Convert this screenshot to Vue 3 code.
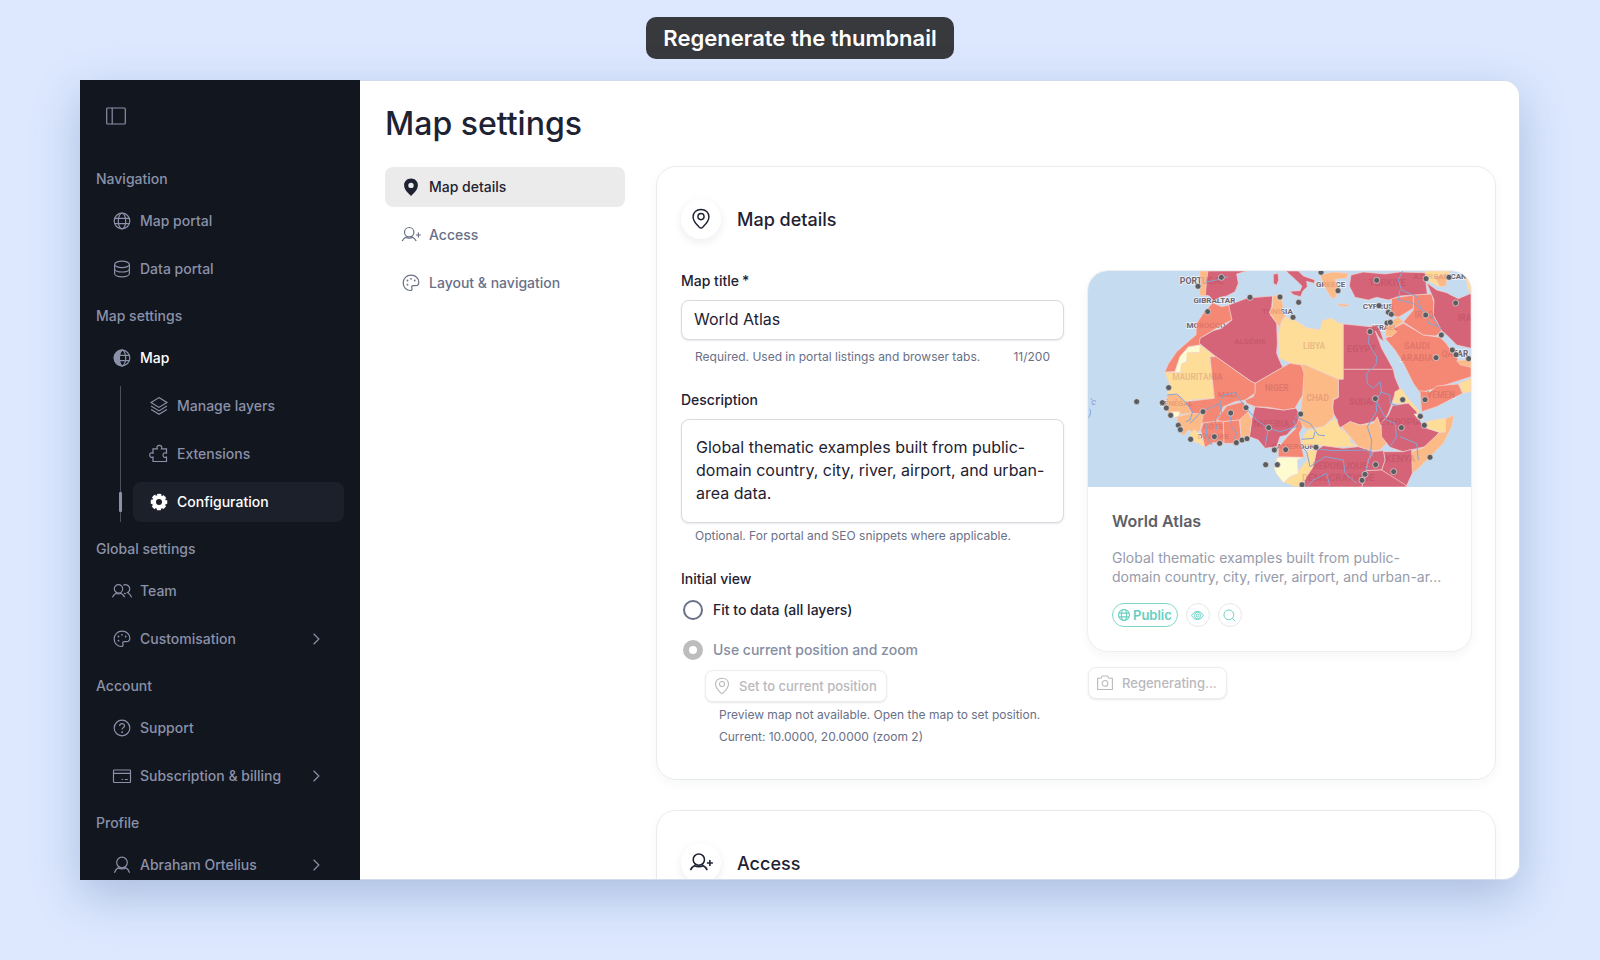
<script setup>
import { ref } from 'vue'

const title = ref('World Atlas')
const description = ref(
  'Global thematic examples built from public-domain country, city, river, airport, and urban-area data.'
)
const view = ref('current')

const groups = [
  {
    name: 'Navigation',
    items: [
      { label: 'Map portal', icon: 'globe' },
      { label: 'Data portal', icon: 'database' }
    ]
  },
  {
    name: 'Map settings',
    items: [
      {
        label: 'Map',
        icon: 'globe-half',
        current: true,
        children: [
          { label: 'Manage layers', icon: 'layers' },
          { label: 'Extensions', icon: 'puzzle' },
          { label: 'Configuration', icon: 'gear', active: true }
        ]
      }
    ]
  },
  {
    name: 'Global settings',
    items: [
      { label: 'Team', icon: 'team' },
      { label: 'Customisation', icon: 'palette', more: true }
    ]
  },
  {
    name: 'Account',
    items: [
      { label: 'Support', icon: 'help' },
      { label: 'Subscription & billing', icon: 'card', more: true }
    ]
  },
  { name: 'Profile', items: [{ label: 'Abraham Ortelius', icon: 'user', more: true }] }
]

const tabs = [
  { label: 'Map details', icon: 'pin-solid', active: true },
  { label: 'Access', icon: 'user-plus' },
  { label: 'Layout & navigation', icon: 'palette' }
]

const land = [
  ['o', '359,33 384,33 380,60 376,108 358,106 362,70'],
  ['r', '384,33 500,33 470,42 475,70 465,95 440,108 420,112 400,122 388,108 376,105 380,60'],
  ['r', '580,43 594,40 596,60 590,76 580,70'],
  ['r', '618,33 655,33 670,48 705,60 702,70 680,64 682,80 668,94 662,110 640,104 630,94 660,92 666,78 645,58'],
  ['s', '398,128 425,140 448,135 456,180 425,195 360,235 360,255 325,260 300,290 285,335 254,337 265,312 290,275 330,240 348,225 350,190 370,160'],
  ['p', '325,262 362,255 360,278 322,280 320,305 305,312 302,338 254,337 285,335 300,290'],
  ['y', '360,255 408,290 390,290 403,415 330,420 318,430 295,408 262,405 268,370 254,337 302,338 305,312 322,305 322,278 360,278'],
  ['r', '446,135 500,115 530,112 578,108 575,140 568,160 590,190 592,250 590,280 598,300 608,322 525,370 510,362 408,290 358,250 360,235 400,212 425,205 456,180'],
  ['o', '578,110 598,102 610,112 606,124 610,140 602,150 616,168 606,180 598,205 590,188 568,158 578,138'],
  ['y', '616,170 645,180 680,203 720,209 727,182 755,174 774,188 790,192 790,358 775,358 670,312 662,320 630,308 598,295 595,220 605,185'],
  ['r', '790,192 830,196 870,200 890,196 902,215 912,245 898,234 886,213 905,265 940,328 790,328'],
  ['r', '790,328 940,328 945,352 960,388 942,410 932,440 925,460 902,500 895,480 862,490 840,495 810,485 790,500 775,503 772,480 757,455 760,420 775,412 775,358 790,358'],
  ['o', '785,500 810,485 840,495 880,490 892,470 905,510 920,550 900,570 870,572 835,560 810,530'],
  ['o', '670,312 775,358 775,412 760,418 758,440 762,470 730,500 680,507 645,475 662,455 668,400 664,320'],
  ['y', '680,512 730,500 765,475 780,503 810,530 812,548 835,558 760,562 710,555 672,558 665,540'],
  ['y', '940,430 945,395 965,385 980,410 1020,455 1008,462 985,430'],
  ['r', '938,436 985,430 1010,455 1015,480 1040,505 1078,516 1060,540 1035,560 970,575 930,562 905,530 903,490 925,465'],
  ['o', '1122,465 1115,500 1090,550 1050,590 1010,630 995,642 995,575 1030,563 1078,518 1095,515 1097,476'],
  ['y', '1040,485 1060,480 1097,475 1096,515 1078,517 1040,504 1030,490'],
  ['p', '1002,462 1024,462 1030,480 1015,478'],
  ['r', '910,575 970,575 995,568 997,640 978,681 905,630 915,600'],
  ['r', '870,575 910,572 915,600 905,630 855,632 860,600'],
  ['r', '855,632 905,630 978,676 978,681 845,681 855,650'],
  ['r', '710,570 730,557 790,565 835,560 880,575 865,600 855,650 845,681 668,681 678,640 700,610'],
  ['y', '680,570 710,570 700,620 680,650 665,681 640,678 610,665 650,640 680,600'],
  ['p', '592,592 672,590 652,600 655,640 630,650 610,668 588,640 582,622'],
  ['s', '640,490 660,478 668,500 658,520 665,560 672,592 595,590 595,562 622,530 648,505'],
  ['r', '525,440 560,444 610,450 648,444 660,465 652,490 620,525 600,530 590,560 555,565 535,540 508,530 515,480'],
  ['s', '525,370 608,322 630,310 664,315 672,340 668,405 645,445 610,450 565,442 525,440 500,430 495,420 520,410 525,395'],
  ['s', '390,290 408,290 510,362 525,370 525,400 495,420 465,425 430,440 410,485 365,490 330,465 318,425 403,415'],
  ['o', '262,405 295,402 318,430 335,460 265,465 258,440'],
  ['p', '270,455 300,455 295,470 280,472'],
  ['o', '290,470 335,460 370,462 365,490 360,512 345,520 325,510 310,528 295,505'],
  ['y', '328,522 345,508 362,530 375,560 335,540'],
  ['s', '370,488 430,482 432,548 400,548 375,562 362,510'],
  ['s', '410,480 440,438 490,425 505,455 480,480 430,485'],
  ['s', '430,485 478,480 484,540 460,550 432,550'],
  ['o', '480,478 505,455 515,480 508,530 484,540'],
  ['s', '940,205 970,190 1030,225 1080,232 1098,250 1135,300 1173,322 1173,350 1080,380 1050,390 1020,398 1000,370 970,310 945,270 915,235 932,228'],
  ['s', '1020,392 1050,396 1070,378 1135,372 1148,400 1070,440 1025,455'],
  ['y', '1138,370 1173,355 1173,395 1148,400'],
  ['o', '1130,302 1173,298 1173,322 1140,314'],
  ['s', '1000,105 1055,102 1062,130 1060,160 1085,212 1068,228 1030,225 970,186 1000,150'],
  ['s', '935,115 1000,105 1000,145 955,172 932,165'],
  ['o', '920,192 955,170 970,186 940,205 950,215 935,230 915,228'],
  ['r', '813,45 850,36 915,42 960,36 1035,38 1038,70 1042,102 960,108 925,120 890,112 865,120 825,112 808,78'],
  ['r', '1040,68 1070,90 1100,98 1135,116 1173,100 1173,265 1130,255 1100,225 1085,212 1060,165 1062,120'],
  ['y', '1035,33 1110,33 1105,60 1080,82 1040,60'],
  ['o', '1062,50 1100,40 1100,78 1080,80'],
  ['o', '720,45 760,36 805,40 800,54 765,58 775,90 765,116 752,112 735,82'],
  ['o', '773,131 808,134 800,140 778,138'],
  ['y', '1156,45 1173,40 1173,104 1162,80']
]

const rivers = [
  '870,205 865,250 890,290 888,315 860,340 862,370 880,385 900,365 905,395 888,420 890,455 862,500 875,540 872,580 855,640',
  '888,420 920,480 945,490 950,530 930,560',
  '900,395 930,405 930,430 955,438',
  '262,405 290,402 315,425 338,455 330,480 318,485',
  '330,490 365,455 420,430 430,405 465,398 495,440 530,480 565,505 555,560',
  '565,505 600,515 650,500 640,480',
  '420,430 425,460 405,480 410,510',
  '450,460 455,500 470,520 460,540',
  '378,490 380,530 395,555',
  '645,470 690,490 715,525 735,527',
  '665,538 700,535 705,515',
  '660,555 680,575 690,620 735,590 790,600 795,640 830,670',
  '720,568 760,572 860,570 880,590',
  '968,33 955,60 965,90 1010,110 1025,150 1055,170 1085,210',
  '960,90 955,120 1000,130 1040,160 1045,190 1075,200',
  '960,530 1010,550 1015,600',
  '378,66 410,60 445,50',
  '680,681 700,660 740,640 750,681'
]

const labels = [
  [366, 71, 'PORTUGAL', 26],
  [403, 128, 'GIBRALTAR', 24],
  [378, 204, 'MOROCCO', 24],
  [510, 251, 'ALGÉRIE', 24],
  [592, 163, 'TUNISIA', 24],
  [352, 360, 'MAURITANIA', 25],
  [442, 411, 'MALI', 24],
  [288, 438, 'SÉNÉGAL', 23],
  [400, 508, 'CÔTE', 24],
  [400, 536, "D'IVOIRE", 24],
  [590, 394, 'NIGER', 25],
  [574, 502, 'NIGERIA', 28],
  [640, 567, 'CAMEROUN', 24],
  [702, 268, 'LIBYA', 25],
  [713, 423, 'CHAD', 25],
  [845, 277, 'EGYPT', 28],
  [850, 436, 'SUDAN', 26],
  [962, 495, 'ETHIOPIA', 28],
  [961, 607, 'KENYA', 29],
  [780, 628, 'REPUBLIQUE', 28],
  [775, 664, 'DÉMOCRATIQUE', 29],
  [752, 82, 'GREECE', 24],
  [922, 78, 'TÜRKIYE', 28],
  [894, 146, 'CYPRUS', 24],
  [914, 210, 'ISRAEL', 23],
  [1032, 175, 'IRAQ', 25],
  [1154, 183, 'IRA', 26],
  [1011, 268, 'SAUDI', 27],
  [1011, 302, 'ARABIA', 27],
  [1125, 290, 'QATAR', 25],
  [1083, 413, 'YEMEN', 25],
  [1080, 58, 'AZERBAIJCAN', 24]
]

const cities = [
  [424, 52], [354, 79], [383, 155], [510, 112], [600, 111], [266, 383], [170, 425], [247, 428],
  [259, 444], [272, 466], [295, 496], [301, 509], [332, 538], [369, 455], [452, 459], [498, 443],
  [403, 530], [419, 550], [469, 548], [486, 540], [501, 536], [566, 503], [583, 570], [557, 614],
  [592, 614], [617, 569], [656, 127], [639, 172], [723, 37], [774, 92], [890, 61], [897, 137],
  [925, 157], [934, 163], [921, 189], [931, 187], [870, 215], [1037, 165], [1038, 56], [1107, 52],
  [1127, 129], [1084, 225], [1117, 270], [1128, 284], [1166, 296], [1068, 293], [1035, 419],
  [968, 419], [886, 416], [662, 462], [1021, 469], [1033, 496], [964, 503], [1050, 592],
  [708, 562], [887, 614], [941, 635], [855, 643], [846, 661], [666, 674]
]
</script>

<template>
  <svg class="sprite" aria-hidden="true">
    <symbol id="i-panel" viewBox="0 0 20 20">
      <rect x=".7" y="2" width="18.6" height="16" rx="1" />
      <path d="M6.2 2v16" />
    </symbol>
    <symbol id="i-globe" viewBox="0 0 20 20">
      <circle cx="10" cy="10" r="7.8" />
      <ellipse cx="10" cy="10" rx="3.7" ry="7.8" />
      <path d="M2.7 7.3h14.6M2.7 12.7h14.6" />
    </symbol>
    <symbol id="i-globe-half" viewBox="0 0 20 20">
      <circle cx="10" cy="10" r="7.8" />
      <path d="M10 2.2a7.8 7.8 0 0 0 0 15.6C6.6 15 6.6 5 10 2.2z" fill="currentColor" />
      <ellipse cx="10" cy="10" rx="3.7" ry="7.8" />
      <path d="M6.5 7.3h10.8M6.5 12.7h10.8" />
    </symbol>
    <symbol id="i-database" viewBox="0 0 20 20">
      <ellipse cx="10" cy="5.4" rx="7.4" ry="3.2" />
      <path d="M2.6 5.4v9.2c0 1.8 3.3 3.2 7.4 3.2s7.4-1.4 7.4-3.2V5.4M2.6 9.8c0 1.8 3.3 3.2 7.4 3.2s7.4-1.4 7.4-3.2" />
    </symbol>
    <symbol id="i-layers" viewBox="0 0 20 20">
      <path d="M10 1.6l7.9 4.9L10 11.4 2.1 6.5zM2.1 10L10 14.9l7.9-4.9M2.1 13.4L10 18.3l7.9-4.9" />
    </symbol>
    <symbol id="i-puzzle" viewBox="0 0 20 20">
      <path d="M4 4.800h4.300c-.9-1.800.1-3.500 2.100-3.500s3 1.700 2.100 3.500h5v4.300c-1.800-.8-3.500 0-3.500 2s1.700 2.900 3.500 2v4.400H4v-4.400c-1.700.8-3.300 0-3.300-2s1.600-2.800 3.300-2z" />
    </symbol>
    <symbol id="i-gear" viewBox="0 0 20 20">
      <circle cx="10" cy="10" r="5" stroke-width="4" />
      <circle cx="10" cy="10" r="7" stroke-width="2.600" stroke-dasharray="3.900 1.600" stroke-dashoffset="1.950" />
    </symbol>
    <symbol id="i-team" viewBox="0 0 20 20">
      <circle cx="6.500" cy="7.800" r="4.200" />
      <path d="M.4 16.300c.8-2.200 2.300-3.400 3.900-4.400M12.600 16.300c-.8-2.200-2.300-3.400-3.900-4.400M3.600 12.300c2 .9 3.900.9 5.800 0M11.300 4.300a4.200 4.200 0 1 1 3.400 7.600M12 12.300l1.800.4M19.600 16.300c-.7-2-1.800-3.300-3.400-4.400" />
    </symbol>
    <symbol id="i-user" viewBox="0 0 20 20">
      <circle cx="10" cy="7.500" r="5.300" />
      <path d="M2.400 17.800c.8-2.600 2.500-4.500 4.500-5.400M17.600 17.800c-.8-2.600-2.500-4.500-4.500-5.400M5.900 12.900c2.700 1.200 5.500 1.200 8.200 0" />
    </symbol>
    <symbol id="i-user-plus" viewBox="0 0 20 20">
      <circle cx="8.200" cy="7.200" r="4.700" />
      <path d="M1.200 15.900c.9-2 2.400-3.300 4.300-4.200M15.200 15.900c-.9-2-2.400-3.300-4.300-4.200M4.400 12.400c2.500 1 5.100 1 7.600 0M14.900 10h5M17.400 7.500v5" />
    </symbol>
    <symbol id="i-palette" viewBox="0 0 20 20">
      <path d="M10 2.200c4.600 0 7.800 3.100 7.800 7 0 2.300-1.300 3.400-3.200 3.400h-2.400c-1.500 0-1.800 1-1.300 2.100.5 1.400 0 2.800-1.500 2.800-4 0-7.200-3.200-7.200-7.600 0-4.600 3.400-7.700 7.800-7.700z" />
      <path class="dots" d="M6.500 7.500h.01M10 5.800h.01M13.700 7.500h.01M6.500 11.700h.01" />
    </symbol>
    <symbol id="i-help" viewBox="0 0 20 20">
      <circle cx="10" cy="10" r="7.800" />
      <path d="M7.600 8c0-3.200 5-3 5-.3 0 1.800-2.500 1.800-2.500 3.900" />
      <path class="dots" d="M10.100 14.200h.01" />
    </symbol>
    <symbol id="i-card" viewBox="0 0 20 20">
      <rect x="1.500" y="4" width="17" height="12.500" rx=".8" />
      <path d="M1.500 7.300h17M9.500 13.500h1.600M12.800 13.500h3" />
    </symbol>
    <symbol id="i-chevron" viewBox="0 0 20 20">
      <path d="M8 5.600l4.400 4.400L8 14.400" />
    </symbol>
    <symbol id="i-pin-solid" viewBox="0 0 20 20">
      <path
        d="M10 1.500c4 0 6.900 2.900 6.900 6.700 0 3.500-2.300 6.100-4.700 8.600L10 19l-2.200-2.200c-2.400-2.500-4.700-5.100-4.700-8.600 0-3.800 2.900-6.700 6.900-6.700zm0 4.200a2.700 2.700 0 1 0 0 5.400 2.700 2.700 0 0 0 0-5.400z"
        fill="currentColor" fill-rule="evenodd" stroke="none" />
    </symbol>
    <symbol id="i-pin" viewBox="0 0 20 20">
      <path d="M10 1.300c4.200 0 7.200 2.800 7.200 6.800 0 4-3.400 7-5.600 9.300-1.100 1.100-2.100 1.100-3.200 0C6.200 15.100 2.800 12.100 2.800 8.100c0-4 3-6.800 7.200-6.800z" />
      <circle cx="10" cy="7.800" r="2.800" />
    </symbol>
    <symbol id="i-camera" viewBox="0 0 20 20">
      <path d="M1.800 4.800h3.800L7 2.300h6l1.400 2.500h3.800v12.400H1.800z" />
      <circle cx="10" cy="10.500" r="3.200" />
    </symbol>
    <symbol id="i-eye" viewBox="0 0 20 20">
      <path d="M1 10c4-8.300 14-8.300 18 0-4 8.300-14 8.300-18 0z" />
      <circle cx="10" cy="10" r="4.800" />
      <circle cx="10" cy="10" r="2" />
    </symbol>
    <symbol id="i-search" viewBox="0 0 20 20">
      <circle cx="9" cy="9" r="7.500" />
      <path d="M14.400 14.400l4.600 4.600" />
    </symbol>
  </svg>

  <div class="stage">
    <header class="caption"><span>Regenerate the thumbnail</span></header>

    <div class="window">
      <aside class="sidebar">
        <div class="sidebar-top">
          <button type="button" class="toggle" aria-label="Toggle sidebar">
            <svg class="icon"><use href="#i-panel" /></svg>
          </button>
        </div>
        <nav aria-label="Main">
          <section v-for="g in groups" :key="g.name">
            <h2>{{ g.name }}</h2>
            <ul class="items">
              <li v-for="item in g.items" :key="item.label">
                <a href="#" class="item" :class="{ current: item.current }">
                  <svg class="icon"><use :href="'#i-' + item.icon" /></svg>
                  <span>{{ item.label }}</span>
                  <svg v-if="item.more" class="icon chevron"><use href="#i-chevron" /></svg>
                </a>
                <ul v-if="item.children" class="items children">
                  <li v-for="c in item.children" :key="c.label" :class="{ marked: c.active }">
                    <a href="#" class="item" :class="{ active: c.active }">
                      <svg class="icon"><use :href="'#i-' + c.icon" /></svg>
                      <span>{{ c.label }}</span>
                    </a>
                  </li>
                </ul>
              </li>
            </ul>
          </section>
        </nav>
      </aside>

      <main class="main">
        <h1>Map settings</h1>
        <div class="columns">
          <nav class="tabs" aria-label="Map settings">
            <a v-for="t in tabs" :key="t.label" href="#" class="tab" :class="{ active: t.active }">
              <svg class="icon"><use :href="'#i-' + t.icon" /></svg>
              <span>{{ t.label }}</span>
            </a>
          </nav>

          <div class="cards">
            <section class="card">
              <header class="card-head">
                <span class="badge"><svg class="icon"><use href="#i-pin" /></svg></span>
                <h2>Map details</h2>
              </header>
              <div class="card-body">
                <form class="form" @submit.prevent>
                  <div class="field">
                    <label for="title">Map title<span class="star">*</span></label>
                    <input id="title" v-model="title" class="box" type="text" maxlength="200" />
                    <p class="hint split">
                      <span>Required. Used in portal listings and browser tabs.</span>
                      <span>{{ title.length }}/200</span>
                    </p>
                  </div>
                  <div class="field">
                    <label for="description">Description</label>
                    <textarea id="description" v-model="description" class="box" rows="3"></textarea>
                    <p class="hint near">Optional. For portal and SEO snippets where applicable.</p>
                  </div>
                  <fieldset>
                    <legend>Initial view</legend>
                    <label class="radio">
                      <input v-model="view" type="radio" name="view" value="fit" />
                      <span>Fit to data (all layers)</span>
                    </label>
                    <label class="radio">
                      <input v-model="view" type="radio" name="view" value="current" disabled />
                      <span>Use current position and zoom</span>
                    </label>
                    <div class="position">
                      <button type="button" class="btn" disabled>
                        <svg class="icon"><use href="#i-pin" /></svg>
                        <span>Set to current position</span>
                      </button>
                      <p class="note">Preview map not available. Open the map to set position.</p>
                      <p class="note">Current: 10.0000, 20.0000 (zoom 2)</p>
                    </div>
                  </fieldset>
                </form>

                <div class="preview-col">
                  <article class="preview">
                    <svg class="map" viewBox="24 33 1149 648" preserveAspectRatio="xMidYMid slice" role="img" aria-label="World Atlas thumbnail">
                      <rect x="24" y="33" width="1149" height="648" class="sea" />
                      <g class="labels">
                        <text v-for="l in labels" :key="l[2]" :x="l[0]" :y="l[1]" :font-size="l[3]">{{ l[2] }}</text>
                      </g>
                      <polygon v-for="(p, i) in land" :key="i" :class="'land ' + p[0]" :points="p[1]" />
                      <polygon class="lake" points="1098,70 1115,60 1155,70 1158,95 1140,112 1110,105" />
                      <g class="labels faint" aria-hidden="true">
                        <text v-for="l in labels" :key="l[2]" :x="l[0]" :y="l[1]" :font-size="l[3]">{{ l[2] }}</text>
                      </g>
                      <polyline v-for="(r, i) in rivers" :key="'r' + i" class="river" :points="r" />
                      <text x="30" y="434" class="ocean">'c</text>
                      <text x="25" y="467" class="ocean">)</text>
                      <circle v-for="(c, i) in cities" :key="'c' + i" class="city" :cx="c[0]" :cy="c[1]" r="9" />
                    </svg>
                    <div class="preview-body">
                      <h3>{{ title }}</h3>
                      <p>Global thematic examples built from public-domain country, city, river, airport, and urban-ar...</p>
                      <div class="chips">
                        <span class="chip"><svg class="icon"><use href="#i-globe" /></svg>Public</span>
                        <span class="dot"><svg class="icon"><use href="#i-eye" /></svg></span>
                        <span class="dot"><svg class="icon"><use href="#i-search" /></svg></span>
                      </div>
                    </div>
                  </article>
                  <button type="button" class="btn" disabled>
                    <svg class="icon"><use href="#i-camera" /></svg>
                    <span>Regenerating...</span>
                  </button>
                </div>
              </div>
            </section>

            <section class="card">
              <header class="card-head">
                <span class="badge"><svg class="icon wide"><use href="#i-user-plus" /></svg></span>
                <h2>Access</h2>
              </header>
            </section>
          </div>
        </div>
      </main>
    </div>
  </div>
</template>

<style>
body {
  margin: 0;
}
</style>

<style scoped>
* {
  box-sizing: border-box;
}
h1, h2, h3, p, ul, fieldset, legend {
  margin: 0;
  padding: 0;
}
a {
  color: inherit;
  text-decoration: none;
}
.sprite {
  position: absolute;
  width: 0;
  height: 0;
}
.icon {
  display: block;
  flex: none;
  width: 20px;
  height: 20px;
  fill: none;
  stroke: currentColor;
  stroke-width: 1.2;
  overflow: visible;
}
.dots {
  stroke-width: 1.8;
  stroke-linecap: round;
}
.stage {
  display: flex;
  flex-direction: column;
  height: 100vh;
  padding: 0 80px 80px;
  overflow: hidden;
  background: #dde8ff;
  font-family: Inter, "Liberation Sans", sans-serif;
  font-size: 14px;
  line-height: 20px;
  color: #1e2233;
}
.caption {
  display: flex;
  flex: none;
  justify-content: center;
  align-items: flex-start;
  height: 80px;
  padding-top: 17px;
}
.caption span {
  padding: 0 17px;
  border-radius: 10px;
  background: #38393d;
  color: #fff;
  font-size: 22px;
  font-weight: 600;
  line-height: 42px;
}
.window {
  display: flex;
  flex: 1;
  min-height: 0;
  border-radius: 0 16px 16px 0;
  box-shadow: 0 16px 48px rgba(60, 100, 150, 0.32);
}
.sidebar {
  flex: none;
  width: 280px;
  padding: 0 16px;
  overflow: hidden;
  background: #12161f;
  color: #8a91a8;
  font-weight: 500;
}
.sidebar-top {
  display: flex;
  align-items: center;
  height: 72px;
  padding-left: 10px;
}
.toggle {
  padding: 0;
  border: 0;
  background: none;
  color: inherit;
}
.sidebar h2 {
  padding: 16px 0 11px;
  font-size: 14px;
  font-weight: 500;
  line-height: 22px;
}
.items {
  display: flex;
  flex-direction: column;
  gap: 8px;
  list-style: none;
}
.item,
.tab {
  display: flex;
  align-items: center;
  gap: 8px;
  height: 40px;
  padding: 0 16px;
  border-radius: 8px;
}
.item.current span {
  color: #fff;
}
.item.active {
  background: #1c202a;
  color: #fff;
}
.chevron {
  width: 24px;
  height: 24px;
  margin-left: auto;
  stroke-width: 1;
}
.children {
  margin: 8px 0 0 24px;
  padding-left: 12px;
  border-left: 1px solid #4c5160;
}
.marked {
  position: relative;
}
.marked::before {
  content: "";
  position: absolute;
  top: 10px;
  left: -14px;
  width: 3px;
  height: 20px;
  border-radius: 1px;
  background: #8a91a8;
}
.main {
  flex: 1;
  min-width: 0;
  padding: 20px 23px 0 25px;
  overflow: hidden;
  border: 1px solid #d3dcee;
  border-left: 0;
  border-radius: 0 16px 16px 0;
  background: #fff;
}
h1 {
  font-size: 32px;
  font-weight: 500;
  line-height: 45px;
}
.columns {
  display: flex;
  gap: 31px;
  align-items: flex-start;
  margin-top: 20px;
}
.tabs {
  display: flex;
  flex: none;
  flex-direction: column;
  gap: 8px;
  width: 240px;
  padding-top: 1px;
  color: #697087;
  font-weight: 500;
}
.tab.active {
  background: #ebebeb;
  color: #1e2233;
}
.cards {
  display: flex;
  flex: 1;
  flex-direction: column;
  gap: 30px;
  min-width: 0;
}
.card {
  padding: 32px 24px 31px;
  border: 1px solid #ebebed;
  border-radius: 20px;
  background: #fff;
  box-shadow: 0 4px 12px rgba(20, 40, 40, 0.04);
}
.card-head {
  display: flex;
  align-items: center;
  gap: 16px;
}
.card-head h2 {
  font-size: 18px;
  font-weight: 500;
  line-height: 25px;
}
.badge {
  display: grid;
  place-items: center;
  width: 40px;
  height: 40px;
  border-radius: 50%;
  background: #fff;
  box-shadow: 0 3px 10px rgba(20, 30, 40, 0.08);
}
.badge .icon {
  width: 22px;
  height: 22px;
  stroke-width: 1.3;
}
.badge .wide {
  width: 24px;
  height: 24px;
}
.card-body {
  display: grid;
  grid-template-columns: 1fr 1fr;
  gap: 24px;
  margin-top: 32px;
}
.field {
  display: flex;
  flex-direction: column;
  margin-bottom: 23px;
}
.field > label,
legend {
  margin-bottom: 9px;
  font-weight: 500;
}
.star {
  margin-left: 3px;
}
.box {
  display: block;
  width: 100%;
  height: 40px;
  padding: 0 12px 2px;
  border: 1px solid #dadbe0;
  border-radius: 8px;
  outline: 0;
  background: #fff;
  box-shadow: 0 1px 2px rgba(20, 30, 60, 0.1);
  color: inherit;
  font: inherit;
  font-size: 16px;
}
textarea.box {
  height: 104px;
  padding: 16px 14px;
  line-height: 23px;
  resize: none;
  overflow: hidden;
}
.hint {
  margin-top: 7px;
  padding: 0 14px;
  color: #697087;
  font-size: 12px;
}
.near {
  margin-top: 3px;
}
.split {
  display: flex;
  justify-content: space-between;
}
fieldset {
  min-width: 0;
  border: 0;
}
legend {
  margin-bottom: 1px;
}
.radio {
  display: flex;
  align-items: center;
  gap: 10px;
  height: 40px;
  padding-left: 2px;
  font-weight: 500;
}
.radio input {
  width: 20px;
  height: 20px;
  margin: 0;
  border: 2px solid #697087;
  border-radius: 50%;
  appearance: none;
}
.radio input:checked {
  border: 6px solid #697087;
}
.radio input:disabled {
  border-color: #bdbdbd;
}
.radio input:disabled + span {
  color: #868da2;
}
.position {
  padding-left: 24px;
}
.btn {
  display: flex;
  align-items: center;
  gap: 8px;
  height: 32px;
  padding: 0 9px 0 7px;
  border: 1px solid #ededef;
  border-radius: 8px;
  background: #fff;
  box-shadow: 0 1px 2px rgba(20, 30, 60, 0.1);
  color: #b9b9bd;
  font: inherit;
  font-size: 13px;
  font-weight: 500;
}
.btn .icon {
  width: 18px;
  height: 18px;
}
.note {
  padding-left: 14px;
  color: #697087;
  font-size: 12px;
  line-height: 22px;
}
.btn + .note {
  margin-top: 2px;
}
.preview {
  margin-bottom: 16px;
  overflow: hidden;
  border-radius: 20px;
  background: #fff;
  box-shadow: 0 0 0 1px #efeff1, 0 4px 12px rgba(20, 40, 40, 0.05);
}
.map {
  display: block;
  width: 100%;
  aspect-ratio: 383 / 216;
}
.sea,
.lake {
  fill: #c5dbf0;
}
.land {
  stroke: #f3d3cf;
  stroke-width: 2;
  stroke-linejoin: round;
}
.r {
  fill: #d66478;
}
.s {
  fill: #f58875;
}
.o {
  fill: #fcba87;
}
.y {
  fill: #fedd98;
}
.p {
  fill: #fffbd0;
}
.labels text {
  fill: #70757e;
  stroke: #eef4fa;
  stroke-width: 5;
  paint-order: stroke;
  text-anchor: middle;
  font-family: Roboto, sans-serif;
  font-weight: 700;
}
.labels.faint text {
  fill: #7a2038;
  stroke: none;
  opacity: 0.17;
}
.river {
  fill: none;
  stroke: #86a5d4;
  stroke-width: 3;
  stroke-linejoin: round;
}
.ocean {
  fill: #7d9fd3;
  font-family: Roboto, sans-serif;
  font-size: 28px;
  font-style: italic;
}
.city {
  fill: #5b5c60;
  stroke: #e9e4e2;
  stroke-width: 2;
}
.preview-body {
  padding: 22px 24px 24px;
}
.preview h3 {
  color: #5e6067;
  font-size: 16px;
  font-weight: 600;
  line-height: 24px;
}
.preview p {
  margin-top: 15px;
  color: #969bab;
  line-height: 19px;
}
.chips {
  display: flex;
  gap: 8px;
  margin-top: 17px;
  color: #66cfc2;
}
.chip,
.dot {
  display: flex;
  align-items: center;
  justify-content: center;
  height: 24px;
  border: 1px solid #7fd7cb;
  border-radius: 12px;
}
.chip {
  gap: 2px;
  padding: 0 5px 0 4px;
  font-size: 13px;
  font-weight: 600;
}
.chip .icon {
  width: 14px;
  height: 14px;
  stroke-width: 1.6;
}
.dot {
  width: 24px;
  border-color: #e8e8ea;
}
.dot .icon {
  width: 13px;
  height: 13px;
  stroke-width: 1.5;
}
</style>
